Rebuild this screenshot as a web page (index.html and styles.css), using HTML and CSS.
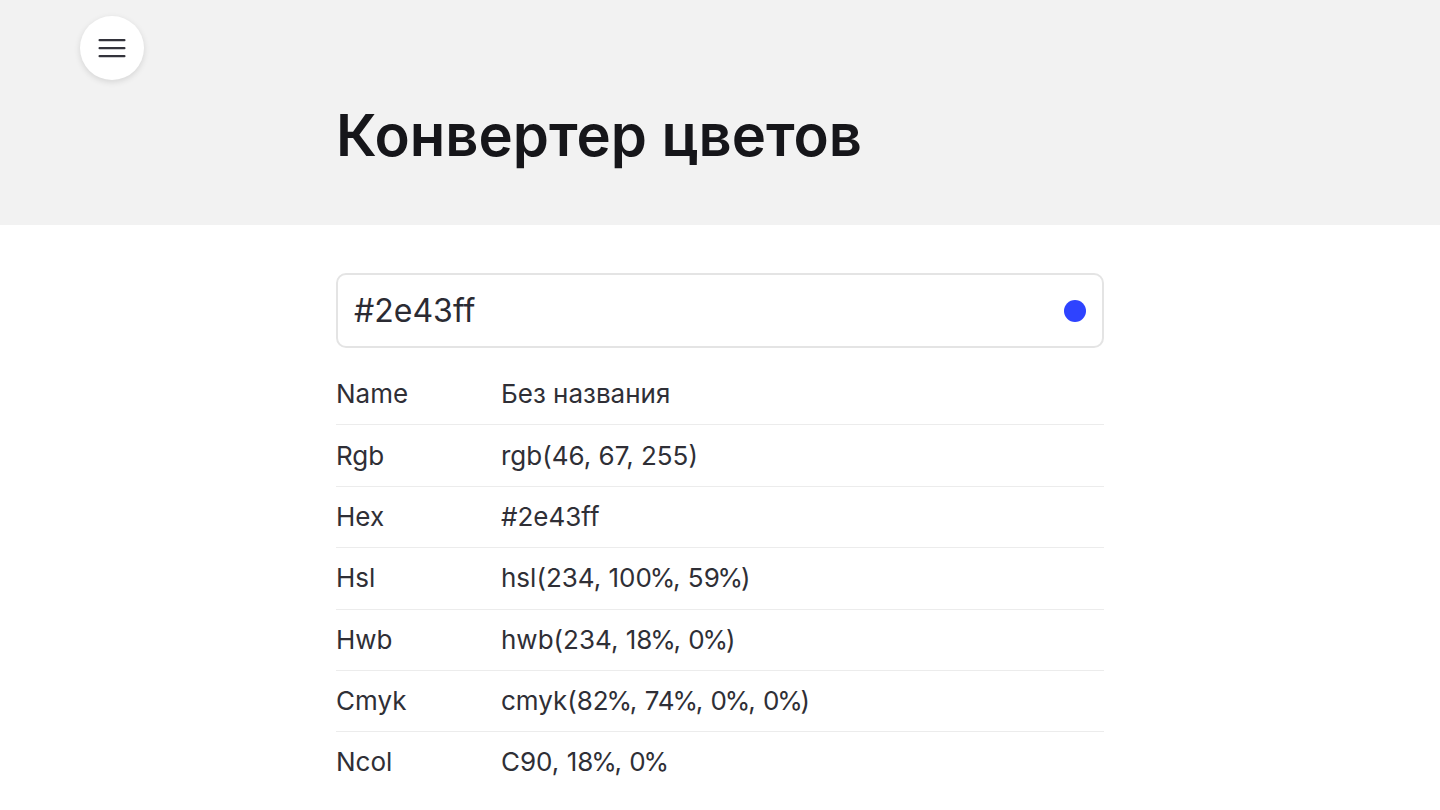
FILE: index.html
```html
<!DOCTYPE html>
<html lang="ru">
<head>
<meta charset="utf-8">
<title>Конвертер цветов</title>
<link rel="stylesheet" href="styles.css">
</head>
<body>
<header class="hero">
  <div class="topbar">
    <button class="menu-btn" aria-label="Меню">
      <svg width="28" height="20" viewBox="0 0 28 20" aria-hidden="true">
        <rect x="0.5" y="1" width="27" height="2.2" rx="1" fill="#33333b"/>
        <rect x="0.5" y="9" width="27" height="2.2" rx="1" fill="#33333b"/>
        <rect x="0.5" y="17" width="27" height="2.2" rx="1" fill="#33333b"/>
      </svg>
    </button>
  </div>
  <div class="container">
    <h1 class="title">Конвертер цветов</h1>
  </div>
</header>
<main class="container content">
  <div class="color-input">
    <span class="color-value">#2e43ff</span>
    <span class="swatch"></span>
  </div>
  <table class="props">
    <tr><td class="key">Name</td><td class="val">Без названия</td></tr>
    <tr><td class="key">Rgb</td><td class="val">rgb(46, 67, 255)</td></tr>
    <tr><td class="key">Hex</td><td class="val">#2e43ff</td></tr>
    <tr><td class="key">Hsl</td><td class="val">hsl(234, 100<span class="pct">%</span>, 59<span class="pct">%</span>)</td></tr>
    <tr><td class="key">Hwb</td><td class="val">hwb(234, 18<span class="pct">%</span>, 0<span class="pct">%</span>)</td></tr>
    <tr><td class="key">Cmyk</td><td class="val">cmyk(82<span class="pct">%</span>, 74<span class="pct">%</span>, 0<span class="pct">%</span>, 0<span class="pct">%</span>)</td></tr>
    <tr><td class="key">Ncol</td><td class="val">C90, 18<span class="pct">%</span>, 0<span class="pct">%</span></td></tr>
  </table>
</main>
</body>
</html>
```

FILE: styles.css
```css
* { box-sizing: border-box; }
html, body { margin: 0; padding: 0; }
body {
  font-family: Inter, "Noto Sans", sans-serif;
  color: #2f2f36;
  background: #ffffff;
}
.hero {
  background: #f2f2f2;
  padding: 16px 0 55px;
}
.topbar {
  padding-left: 80px;
}
.menu-btn {
  width: 64px;
  height: 64px;
  border-radius: 50%;
  border: none;
  background: #ffffff;
  box-shadow: 0 2px 6px rgba(0,0,0,0.12);
  display: flex;
  align-items: center;
  justify-content: center;
  padding: 0;
  cursor: pointer;
}
.container {
  width: 768px;
  margin: 0 auto;
}
.title {
  margin: 20px 0 0;
  font-size: 58px;
  font-weight: 600;
  line-height: normal;
  color: #16161a;
}
.content {
  padding-top: 48px;
}
.color-input {
  height: 75px;
  border: 2px solid #e4e4e4;
  border-radius: 10px;
  display: flex;
  align-items: center;
  justify-content: space-between;
  padding: 0 16px;
}
.color-value {
  font-size: 32px;
  color: #2b2b33;
}
.swatch {
  width: 22px;
  height: 22px;
  border-radius: 50%;
  background: #2e43ff;
}
.props {
  width: 100%;
  border-collapse: collapse;
  margin-top: 16px;
  font-size: 26px;
  line-height: 36px;
}
.props td {
  padding: 12.2px 0;
  border-bottom: 1px solid #ececec;
  vertical-align: top;
}
.props tr:last-child td { border-bottom: none; }
.props .key { width: 165px; }
.pct { margin: 0 -2.2px; }
```
